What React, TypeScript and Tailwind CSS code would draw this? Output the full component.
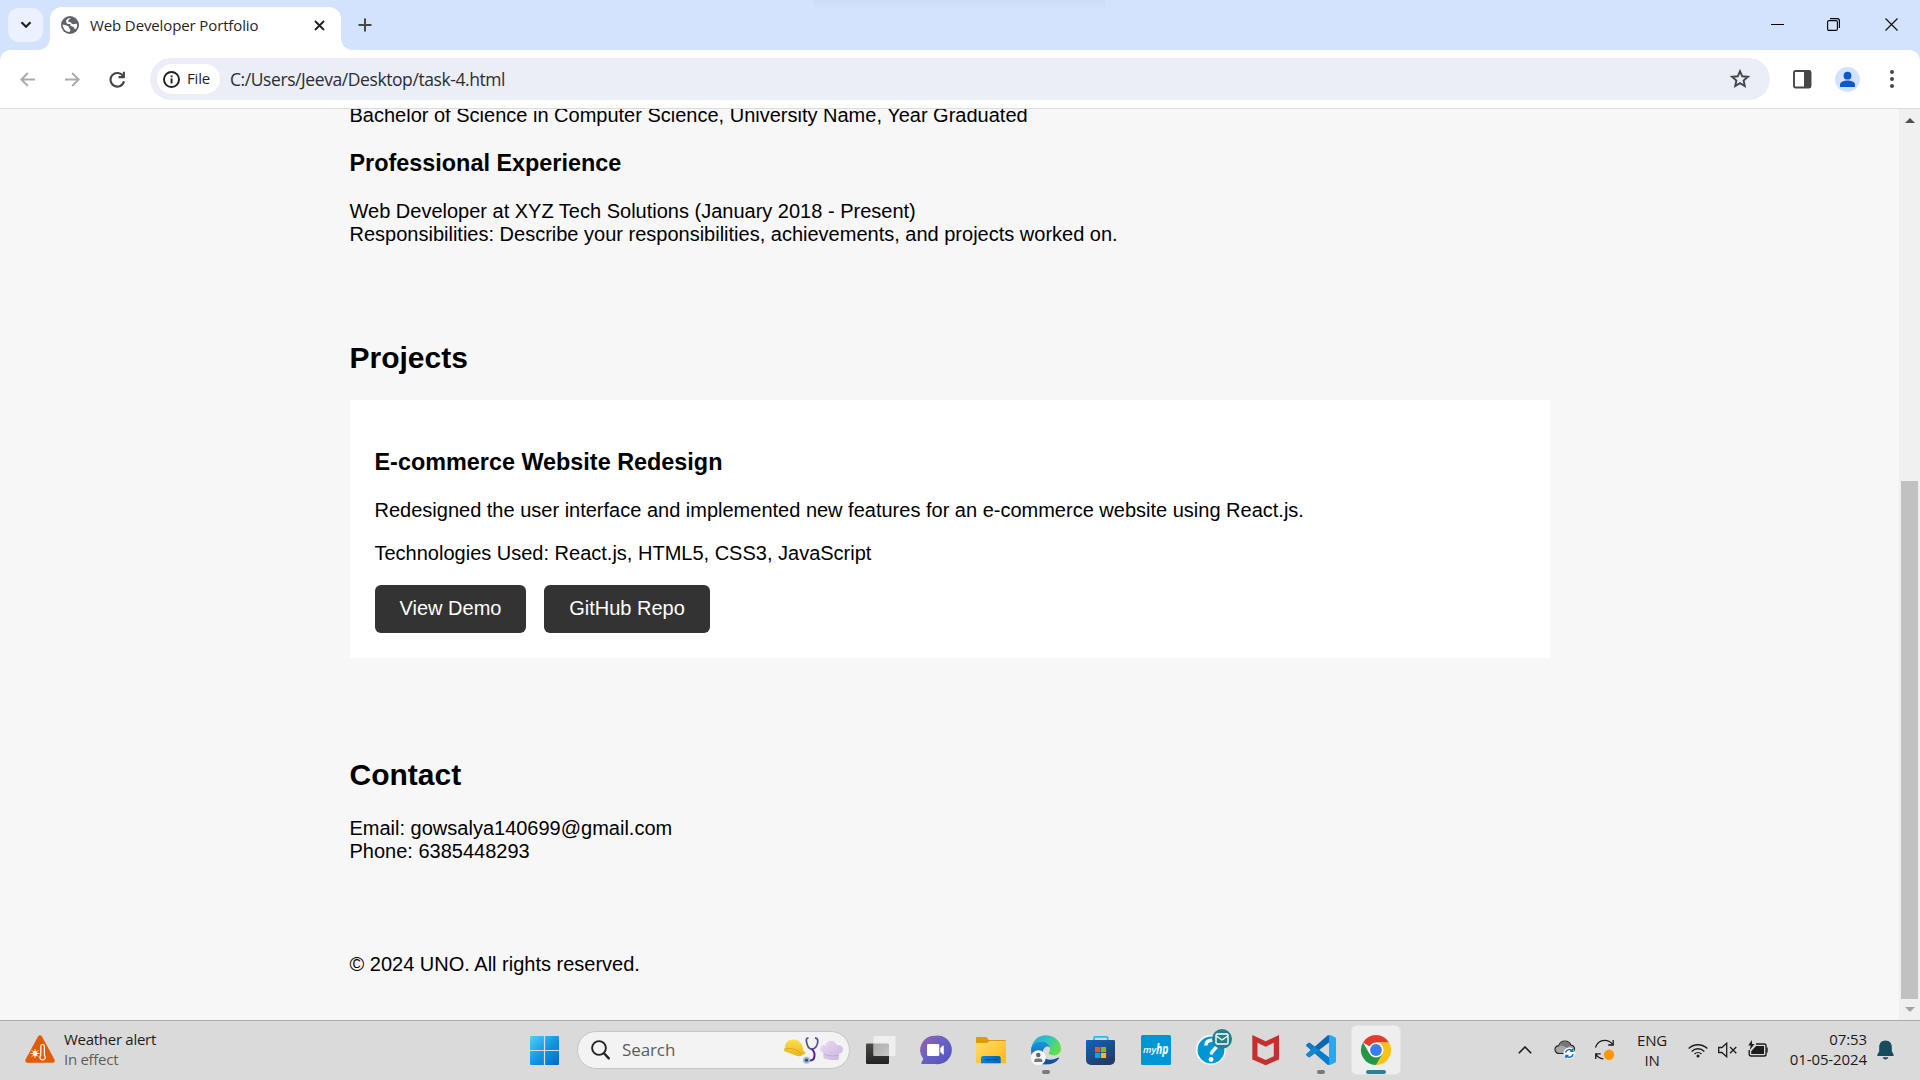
import React from "react";

const UI = "font-['Open_Sans','Noto_Sans',sans-serif]";

function TabStrip() {
  return (
    <div className="flex h-[50px] w-full items-start bg-[#d3e3fd]">
      <div className="ml-2 mt-2 flex h-[34px] w-[35px] items-center justify-center rounded-[11px] bg-[#ebf1fe]">
        <svg width="12" height="8" viewBox="0 0 12 8" fill="none">
          <path d="M1.5 1.2 6 5.7l4.500-4.500" stroke="#1f1f1f" strokeWidth="2.200" />
        </svg>
      </div>
      <svg className="-ml-[5px] mt-[38px]" width="12" height="12" viewBox="0 0 12 12">
        <path d="M12 0v12H0C7 12 12 7 12 0z" fill="#fff" />
      </svg>
      <div className="mt-[7px] flex h-[43px] w-[291px] items-center rounded-t-[12px] bg-white">
        <svg className="ml-[11px] -mt-[7px]" width="18" height="18" viewBox="0 0 18 18">
          <circle cx="9" cy="9" r="9" fill="#5f6368" />
          <path
            d="M9.8 1.900C9.300 3.300 7.800 3 7.300 4.300c-.5 1.500.8 1.900 1.900 1.900 1.200 0 1 1.500 2.200 1.900 1.500.4 2.600-.7 4.500-.2.500 2.100-.1 3.800-1 5.100-1.200.2-1.700-.2-1.900-1.200-.3-1.300-1.400-1.200-2.500-1.500-1.300-.4-1.200-1.500-1-2.300-1.400.1-2.700.2-3.700-.8-.8-.9-.8-2-.6-3C6.400 2.700 8 1.800 9.800 1.900z"
            fill="#fff"
          />
          <path d="M1.700 8.500c1.300.6 2.700.5 3.900.9 1.500.5 2.600 1.300 2.700 2.500.1 1.300 1.200 1.300 1.100 2.300-.1.800-.9 1.200-1 1.900C4.200 15.700 1.700 12 1.700 8.500z" fill="#fff" />
        </svg>
        <span className={`${UI} -mt-[7px] ml-[11px] w-[220px] whitespace-nowrap text-[15px] tracking-[-0.12px] text-[#1f1f1f]`}>
          Web Developer Portfolio
        </span>
        <svg className="-mt-[7px] ml-[4px]" width="11" height="11" viewBox="0 0 11 11">
          <path d="M1 1l9 9M10 1l-9 9" stroke="#1f1f1f" strokeWidth="1.800" />
        </svg>
      </div>
      <svg className="mt-[38px]" width="12" height="12" viewBox="0 0 12 12">
        <path d="M0 0v12h12C5 12 0 7 0 0z" fill="#fff" />
      </svg>
      <svg className="ml-[5px] mt-[18px]" width="14" height="14" viewBox="0 0 14 14">
        <path d="M7 .5v13M.5 7h13" stroke="#444746" strokeWidth="2" />
      </svg>
      <div className="ml-[442px] h-[10px] w-[291px] bg-linear-to-b from-[#cbdcf6] to-[#d3e3fd]" />
      <div className="ml-auto mr-[22px] flex items-start">
        <svg className="mt-[24px]" width="13" height="2" viewBox="0 0 13 2">
          <path d="M0 .5h13" stroke="#000" />
        </svg>
        <svg className="ml-[43px] mt-[18px]" width="13" height="13" viewBox="0 0 13 13" fill="none" stroke="#000" strokeWidth="1.100">
          <rect x=".6" y="2.600" width="9.800" height="9.800" rx="1.400" />
          <path d="M3 .6h7.200a2.200 2.200 0 0 1 2.200 2.200V10" />
        </svg>
        <svg className="ml-[45px] mt-[18px]" width="13" height="13" viewBox="0 0 13 13">
          <path d="M.5.5l12 12M12.500.5l-12 12" stroke="#111" strokeWidth="1.200" />
        </svg>
      </div>
    </div>
  );
}

function Toolbar() {
  return (
    <div className="h-[59px] w-full bg-[#d3e3fd]">
      <div className="flex h-[59px] w-full items-center rounded-t-[10px] border-b border-[#dcdcdc] bg-white">
        <svg className="ml-5" width="15" height="15" viewBox="0 0 15 15" fill="none" stroke="#a9abab" strokeWidth="1.900">
          <path d="M15 7.500H1.800M7.800 1 1.300 7.500l6.500 6.500" />
        </svg>
        <svg className="ml-[30px]" width="15" height="15" viewBox="0 0 15 15" fill="none" stroke="#a9abab" strokeWidth="1.900">
          <path d="M0 7.500h13.200M7.200 1l6.500 6.500L7.200 14" />
        </svg>
        <svg className="ml-[29px]" width="17" height="17" viewBox="0 0 17 17">
          <path d="M14.200 5.300A6.800 6.800 0 1 0 15 10.200" fill="none" stroke="#444746" strokeWidth="2.100" />
          <path d="M15.900.8v6.400H9.500V5.100h4.300V.8z" fill="#444746" />
        </svg>
        <div className="ml-[24px] flex h-[42px] w-[1620px] items-center rounded-full bg-[#ebeef7]">
          <div className="ml-[7px] flex h-[30px] w-[63px] items-center rounded-full bg-white">
            <svg className="ml-[6px]" width="17" height="17" viewBox="0 0 17 17">
              <circle cx="8.500" cy="8.500" r="7.500" fill="none" stroke="#1f1f1f" strokeWidth="1.900" />
              <path d="M7.600 7.500h1.900v5H7.600zM7.600 4.400h1.900v1.900H7.600z" fill="#1f1f1f" />
            </svg>
            <span className={`${UI} -mt-px ml-[7px] text-[15px] tracking-[-0.15px] text-[#1f1f1f]`}>File</span>
          </div>
          <span className={`${UI} ml-[10px] whitespace-nowrap text-[17.5px] tracking-[-0.42px] text-[#2a2d33]`}>
            C:/Users/Jeeva/Desktop/task-4.html
          </span>
          <svg className="ml-auto mr-5" width="20" height="20" viewBox="0 0 20 20">
            <path
              d="M10 2.200 12.200 7.300l5.600.5-4.200 3.700 1.200 5.500L10 14.100 5.200 17l1.200-5.500-4.200-3.700 5.600-.5z"
              fill="none"
              stroke="#444746"
              strokeWidth="1.900"
            />
          </svg>
        </div>
        <svg className="ml-[23px]" width="19" height="19" viewBox="0 0 19 19">
          <rect x="1" y="1" width="16.500" height="16.500" rx="1.500" fill="#fff" stroke="#444746" strokeWidth="1.900" />
          <path d="M11 1h6.500v16.500H11z" fill="#444746" />
        </svg>
        <svg className="ml-[23px]" width="25" height="25" viewBox="0 0 25 25">
          <circle cx="12.500" cy="12.500" r="12.500" fill="#d3e3fd" />
          <circle cx="12.500" cy="8.700" r="3.900" fill="#0b57d0" />
          <path d="M5 20v-2.500c0-2.700 4.500-4 7.500-4s7.500 1.300 7.500 4V20z" fill="#0b57d0" />
        </svg>
        <svg className="ml-[30px]" width="4" height="18" viewBox="0 0 4 18" fill="#444746">
          <circle cx="2" cy="2" r="2" />
          <circle cx="2" cy="9" r="2" />
          <circle cx="2" cy="16" r="2" />
        </svg>
      </div>
    </div>
  );
}

function Page() {
  return (
    <div className="flex h-[911px] w-full overflow-hidden bg-[#f7f7f7] font-['Liberation_Sans',Arial,sans-serif] text-[20px] leading-[23px] text-black">
      <main className="ml-[350px] w-[1200px]">
        <p className="-ml-[0.5px] -mt-[5px]">Bachelor of Science in Computer Science, University Name, Year Graduated</p>
        <h3 className="-ml-[0.5px] mt-[23px] text-[23.4px] font-bold leading-[27px]">Professional Experience</h3>
        <p className="-ml-[0.5px] mt-[23px]">
          Web Developer at XYZ Tech Solutions (January 2018 - Present)
          <br />
          Responsibilities: Describe your responsibilities, achievements, and projects worked on.
        </p>
        <h2 className="-ml-[0.5px] mt-[95px] text-[30px] font-bold leading-[34px]">Projects</h2>
        <section className="mt-[25px] h-[258px] bg-white px-[24.5px] pt-[49px]">
          <h3 className="text-[23.4px] font-bold leading-[27px]">E-commerce Website Redesign</h3>
          <p className="mt-[23px]">
            Redesigned the user interface and implemented new features for an e-commerce website using React.js.
          </p>
          <p className="mt-5">Technologies Used: React.js, HTML5, CSS3, JavaScript</p>
          <div className="ml-[0.5px] mt-5 flex gap-[18px] text-white">
            <button className="h-12 w-[151px] rounded-[6px] bg-[#333] pb-[2px]">View Demo</button>
            <button className="h-12 w-[166px] rounded-[6px] bg-[#333] pb-[2px]">GitHub Repo</button>
          </div>
        </section>
        <h2 className="-ml-[0.5px] mt-[100px] text-[30px] font-bold leading-[34px]">Contact</h2>
        <p className="-ml-[0.5px] mt-[25px]">
          Email: gowsalya140699@gmail.com
          <br />
          Phone: 6385448293
        </p>
        <p className="-ml-[0.5px] mt-[90px]">© 2024 UNO. All rights reserved.</p>
      </main>
      <div className="ml-auto flex w-[21px] flex-col items-center bg-[#f0f0f0]">
        <svg className="mt-[9px]" width="10" height="5" viewBox="0 0 10 5">
          <path d="M0 5l5-5 5 5z" fill="#505050" />
        </svg>
        <div className="mt-[358px] h-[518px] w-[17px] bg-[#c1c1c1]" />
        <svg className="mt-[8px]" width="10" height="5" viewBox="0 0 10 5">
          <path d="M0 0l5 5 5-5z" fill="#a3a3a3" />
        </svg>
      </div>
    </div>
  );
}

function Tile({ children, active = false }: { children: React.ReactNode; active?: boolean }) {
  return (
    <div className={active ? "h-12 w-12 rounded-[5px] bg-[#eeeeee] shadow-[0_0_0_1px_#e4e4e4]" : "h-12 w-12"}>
      <svg width="48" height="48" viewBox="0 0 48 48">
        {children}
      </svg>
    </div>
  );
}

function Apps() {
  return (
    <div className="ml-[7px] flex gap-[7px]">
      <Tile>
        <defs>
          <linearGradient id="tvDark" x1="0" y1="0" x2="0" y2="1">
            <stop offset="0" stopColor="#4a4a47" />
            <stop offset="1" stopColor="#222" />
          </linearGradient>
          <linearGradient id="tvMid" x1="0" y1="0" x2="1" y2="1">
            <stop offset="0" stopColor="#8f8f8f" />
            <stop offset="1" stopColor="#b5b5b5" />
          </linearGradient>
        </defs>
        <rect x="9" y="17.500" width="23" height="20.500" rx="1" fill="url(#tvDark)" />
        <rect x="16.500" y="10" width="22" height="20" rx="1" fill="#efefef" />
        <path d="M16.500 17.500H31a1 1 0 0 1 1 1V30H16.500z" fill="url(#tvMid)" opacity=".7" />
      </Tile>
      <Tile>
        <defs>
          <linearGradient id="chat" x1="0" y1="0" x2="1" y2="1">
            <stop offset="0" stopColor="#9a5fb0" />
            <stop offset=".45" stopColor="#6a62c4" />
            <stop offset="1" stopColor="#4f52c0" />
          </linearGradient>
        </defs>
        <path d="M23.500 9.700a14.300 14.300 0 1 1 0 28.300H10.200c-1 0-1.200-.8-.7-1.400l1.800-3.800A14.300 14.300 0 0 1 23.500 9.700z" fill="url(#chat)" />
        <rect x="15" y="18" width="12.300" height="12" rx="1.300" fill="#fff" />
        <path d="M28.300 22l2.600-2.400c.4-.3.900-.1.900.4v8c0 .5-.5.700-.9.400L28.300 26z" fill="#fff" />
      </Tile>
      <Tile>
        <defs>
          <linearGradient id="fold" x1="0" y1="0" x2="1" y2="1">
            <stop offset="0" stopColor="#ffdc6b" />
            <stop offset="1" stopColor="#fcb913" />
          </linearGradient>
          <linearGradient id="foldBlue" x1="0" y1="0" x2="1" y2="0">
            <stop offset="0" stopColor="#0b84d8" />
            <stop offset="1" stopColor="#0563b3" />
          </linearGradient>
        </defs>
        <path d="M9 12a1 1 0 0 1 1-1h9.300l2.500 3H38a1 1 0 0 1 1 1v5H9z" fill="#dd9c07" />
        <path d="M9 17h11l2.500-2H39v22.300H9z" fill="url(#fold)" />
        <path d="M14 37.300v-5a2.300 2.300 0 0 1 2.300-2.300h15a2.300 2.300 0 0 1 2.400 2.300v5z" fill="url(#foldBlue)" />
        <path d="M17.500 33.700h13" stroke="#063f77" strokeWidth="1" />
      </Tile>
      <Tile>
        <defs>
          <linearGradient id="edgeTop" x1="0" y1="0" x2="1" y2=".5">
            <stop offset="0" stopColor="#1fa6dc" />
            <stop offset=".5" stopColor="#2fc2c9" />
            <stop offset="1" stopColor="#62e04a" />
          </linearGradient>
          <linearGradient id="edgeLeft" x1="0" y1="0" x2="0" y2="1">
            <stop offset="0" stopColor="#1b93dd" />
            <stop offset="1" stopColor="#0b5cad" />
          </linearGradient>
        </defs>
        <path d="M9 24.500C9.500 16 15 9.200 24 9.200S39 16 39 22.800c0 4-3.200 6.600-7 6.600-3 0-5.300-1-5.300-2.300 0-1 1.300-1.400 1.300-3.700 0-3-3-5.700-8-5.700-6 0-10 3-11 6.800z" fill="url(#edgeTop)" />
        <path d="M9 24.500c0-5 4.500-8.700 10.500-8.700 4.500 0 7.500 2.500 8.300 5.400-1.300-1-3.500-1-5.300.8-3 3-2 8 1 11.500l1 5C15.500 38.700 9 32.500 9 24.500z" fill="url(#edgeLeft)" />
        <path d="M20.500 24.500c-1 5 2.500 9.300 7.300 9.300 3.800 0 6.400-1.300 8.600-2.300.6-.2 1 .3.700.8-2.600 4-7.600 6.500-13 6-4.800-1.300-6.800-9.200-3.600-13.800z" fill="#0f52a0" />
        <circle cx="16.300" cy="31.700" r="7.500" fill="#f7f7f7" />
        <circle cx="16.300" cy="29" r="2.300" fill="#666" />
        <path d="M12.300 36v-1.300c0-1.500 1-2.300 2.300-2.300H18c1.300 0 2.300.8 2.300 2.300V36z" fill="#777" />
        <rect x="20" y="44" width="8" height="4" rx="2" fill="#7a7a7a" />
      </Tile>
      <Tile>
        <defs>
          <linearGradient id="store" x1="0" y1="0" x2=".6" y2="1">
            <stop offset="0" stopColor="#0f66b8" />
            <stop offset="1" stopColor="#243a68" />
          </linearGradient>
        </defs>
        <path d="M17 15v-3.200a1 1 0 0 1 1-1h11.700a1 1 0 0 1 1 1V15" fill="none" stroke="#25bdf2" strokeWidth="1.800" />
        <path d="M9 15a1 1 0 0 1 1-1h27a1 1 0 0 1 1 1v19a5 5 0 0 1-5 5H14a5 5 0 0 1-5-5z" fill="url(#store)" />
        <path d="M18 21h5.200v5.200H18z" fill="#f35325" />
        <path d="M23.900 21h5.200v5.200h-5.200z" fill="#81bc06" />
        <path d="M18 26.900h5.200v5.200H18z" fill="#05a6f0" />
        <path d="M23.900 26.900h5.200v5.200h-5.200z" fill="#ffba08" />
      </Tile>
      <Tile>
        <rect x="9" y="9" width="30" height="30" rx="1.500" fill="#0096d6" />
        <text x="11" y="26.500" fill="#fff" fontFamily="Open Sans" fontSize="9" fontStyle="italic" fontWeight="600" textLength="13" lengthAdjust="spacingAndGlyphs">my</text>
        <text x="24" y="28" fill="#fff" fontFamily="Open Sans" fontSize="15" fontStyle="italic" fontWeight="700" textLength="12.500" lengthAdjust="spacingAndGlyphs">hp</text>
      </Tile>
      <Tile>
        <circle cx="24" cy="24" r="14.200" fill="#0096d6" stroke="#fff" strokeWidth="1.500" />
        <path d="M18.800 19.500c.2-3.500 2.500-5.300 5.700-5.300 3.500 0 5.500 1.800 5.500 4.700 0 4-5.300 4.500-5.700 9.600" fill="none" stroke="#fff" strokeWidth="3.400" />
        <circle cx="24" cy="33.500" r="2.400" fill="#fff" />
        <circle cx="35" cy="13" r="10" fill="#237f8b" />
        <rect x="29" y="8" width="12" height="10" rx="1.300" fill="none" stroke="#fff" strokeWidth="1.400" />
        <path d="M29.300 10l5.700 4 5.700-4" fill="none" stroke="#fff" strokeWidth="1.400" />
      </Tile>
      <Tile>
        <path d="M10.300 9 23.700 15.300 37 9v24.500L23.700 39.200 10.300 33.500z" fill="#c5302f" />
        <path d="M15.500 16.700l8.200 4 8.100-4v13.600l-8.100 3.600-8.200-3.600z" fill="#dadada" />
      </Tile>
      <Tile>
        <path d="M9.400 18.700l2-1.700c.5-.4 1-.4 1.500 0L33 32.300V39L30.500 38.500 9.400 20c-.4-.4-.4-.9 0-1.300z" fill="#0c7cc9" />
        <path d="M9.400 29.300l2 1.700c.5.400 1 .4 1.500 0L33 15.700V9l-2.500.5L9.400 28c-.4.400-.4.900 0 1.300z" fill="#0a68b0" />
        <path d="M9.400 18.700l2-1.700c.5-.4 1-.4 1.500 0L33 32.300V39L30.500 38.500 9.400 20c-.4-.4-.4-.9 0-1.300z" fill="#0c7cc9" />
        <path d="M9.400 29.300l2 1.700c.5.400 1 .4 1.500 0l9-6.800-5-2.800L9.400 28c-.4.400-.4.900 0 1.300z" fill="#1487d4" />
        <path d="M30.700 9.300 33 9l5 2.200c.6.300 1 .8 1 1.500v22.600c0 .7-.4 1.200-1 1.500L33 39l-2.500-.5c1.200.2 2-.6 2-1.800V11.300c0-1.200-.8-2-1.800-2z" fill="#2aa7f2" />
        <path d="M32 11h1v26h-1z" fill="#2aa7f2" />
        <rect x="20" y="44" width="8" height="4" rx="2" fill="#7a7a7a" />
      </Tile>
      <Tile active>
        <path d="M24 24 11 16.500A15 15 0 0 1 37 16.500H24z" fill="#e33b2e" />
        <path d="M24 16.500h13A15 15 0 0 1 24 39l6.500-11.300z" fill="#fbc116" />
        <path d="M11 16.500A15 15 0 0 0 24 39l6.500-11.300L24 24l-6.500 3.700z" fill="#249644" />
        <circle cx="24" cy="24" r="7.500" fill="#fff" />
        <circle cx="24" cy="24" r="5.900" fill="#3b7ded" />
        <rect x="14" y="44" width="20" height="4" rx="2" fill="#2a8391" />
      </Tile>
    </div>
  );
}

function SearchBox() {
  return (
    <div className="ml-[18px] flex h-[38px] w-[273px] items-center rounded-full border border-[#c6c6c6] bg-[#f3f3f3]">
      <svg className="ml-[13px]" width="19" height="20" viewBox="0 0 19 20" fill="none" stroke="#222" strokeLinecap="round">
        <circle cx="8" cy="8" r="6.900" strokeWidth="1.900" />
        <path d="M13 13.200l4.800 5.200" strokeWidth="2.300" />
      </svg>
      <span className={`${UI} ml-[12px] w-[161px] text-[17px] tracking-[-0.1px] text-[#5c5c5c]`}>Search</span>
      <svg width="61" height="28" viewBox="0 0 61 28">
        <defs>
          <linearGradient id="hat" x1="0" y1="0" x2="0" y2="1">
            <stop offset="0" stopColor="#fbe04d" />
            <stop offset="1" stopColor="#e8b51d" />
          </linearGradient>
          <linearGradient id="chef" x1="0" y1="0" x2="1" y2="1">
            <stop offset="0" stopColor="#e9def5" />
            <stop offset="1" stopColor="#c9b2de" />
          </linearGradient>
        </defs>
        <path d="M2 12C2 6 6 3 11 3.500c6 .6 9 5 9 10.500l2.500 3c.3 1-1 1.600-2.500 1.300-1.300 2-4 2.500-7 1.200L1.500 15.200C.4 14.500.4 12.600 2 12z" fill="url(#hat)" />
        <path d="M2 13c6-1.500 12 .5 17.500 5" fill="none" stroke="#d9a517" strokeWidth=".9" />
        <path d="M25.500 2.200c-2-.2-2.500 1-2 3.500.6 3.800 2 7.300 5 7.500 3.800.2 6.300-4 6.300-8 0-2.300-.8-3.200-2.800-3.400" fill="none" stroke="#544d87" strokeWidth="1.700" />
        <path d="M28.600 13c4 3 4.500 12-2.600 11.600h-1.500" fill="none" stroke="#55238f" strokeWidth="2" />
        <circle cx="23.500" cy="24.200" r="3.500" fill="#9dbbd9" />
        <circle cx="23.500" cy="24.200" r="1.600" fill="#335270" />
        <path d="M40.500 22.300 40.300 16.500c-3.800-1-4-5.300-1.300-6.800 1.300-.8 2.400-.7 3.300-.2C42.800 6.300 45 4.700 48 4.700s5 1.700 5.500 4.400c3.500-.6 6.500 1.300 6.500 4.200 0 2.700-2 4.300-4 4.500l-.3 5.700c-5 1-10.200.6-15.200-1.200z" fill="url(#chef)" />
        <path d="M40.500 18.300c5 1.600 10 2 15.300 1" fill="none" stroke="#bda6d2" strokeWidth=".8" />
      </svg>
    </div>
  );
}

function Tray() {
  return (
    <div className={`${UI} ml-auto mr-[26px] flex items-center text-[15px] leading-5 text-[#1c1c1c]`}>
      <svg width="14" height="8" viewBox="0 0 14 8" fill="none">
        <path d="M.8 7.200 7 1l6.200 6.200" stroke="#1c1c1c" strokeWidth="1.600" />
      </svg>
      <svg className="ml-[22px]" width="22" height="20" viewBox="0 0 22 20">
        <path d="M5.500 13.500c-2.500 0-4.500-1.500-4.500-4 0-2.300 1.700-3.600 3.700-3.900C5.800 2.800 8 1 11 1c2.800 0 5 1.700 5.900 4.200 2.300.3 3.600 2 3.600 4 0 2.500-1.800 4.300-4 4.300z" fill="#a7a7a7" stroke="#242424" strokeWidth="1.200" />
        <path d="M5 5.800c3-.8 5 .5 8 2.200l3.500-2.500C15.500 3 13.500 1.500 11 1.500S6 3 5 5.800z" fill="#777" />
        <circle cx="15.300" cy="13.300" r="5.700" fill="#fff" />
        <path d="M11.500 12.700a4 4 0 0 1 7-1.800M19.200 14a4 4 0 0 1-7 1.800M18.800 8.800v2.500h-2.500M11.900 18v-2.500h2.500" fill="none" stroke="#0f6cbd" strokeWidth="1.400" />
      </svg>
      <svg className="ml-[18px]" width="22" height="22" viewBox="0 0 22 22">
        <path d="M1.500 8.500C3 3.800 6.500 1.300 10.500 1.300c3.500 0 6.500 1.600 8.400 4.500M19.200 1v5h-5M1.700 20v-5.200h5M2 15.300c1.600 2.700 4 4.200 7.300 4.600" fill="none" stroke="#1c1c1c" strokeWidth="1.300" />
        <circle cx="15" cy="15.700" r="5.200" fill="#ff9800" />
      </svg>
      <div className="ml-[18px] w-[36px] text-center tracking-[-0.2px]">
        ENG
        <br />
        IN
      </div>
      <svg className="ml-[18px]" width="20" height="16" viewBox="0 0 20 16" fill="none" stroke="#1c1c1c" strokeWidth="1.400">
        <path d="M.7 6.600a13 13 0 0 1 18.600 0M3.700 9.400a8.800 8.800 0 0 1 12.600 0M6.500 12.100a5 5 0 0 1 7 0" />
        <circle cx="10" cy="14" r="1.500" fill="#1c1c1c" stroke="none" />
      </svg>
      <svg className="ml-[10px]" width="20" height="16" viewBox="0 0 20 16" fill="none" stroke="#1c1c1c" strokeWidth="1.300">
        <path d="M.7 5.500h3.200L8.700 1.200v13.600L3.900 10.500H.7z" />
        <path d="M12 5l6.300 6.300M18.300 5 12 11.300" />
      </svg>
      <svg className="-mt-[2px] ml-[10px]" width="21" height="18" viewBox="0 0 21 18">
        <path d="M8 4h8.200a1.800 1.800 0 0 1 1.800 1.800v8.400a1.800 1.800 0 0 1-1.800 1.800H3a1.800 1.800 0 0 1-1.800-1.800V10" fill="none" stroke="#1c1c1c" strokeWidth="1.400" />
        <path d="M8 6h8v8H3.200v-2.800z" fill="#1c1c1c" />
        <path d="M18.500 7.500h1.200v5h-1.200z" fill="#1c1c1c" />
        <path d="M3.800 0 .3 5.500h2.400L1.800 10l4.700-6H4z" fill="#1c1c1c" />
      </svg>
      <div className="-mt-[3px] ml-[17px] w-[81px] whitespace-nowrap text-right tracking-[-0.1px]">
        07:53
        <br />
        01-05-2024
      </div>
      <svg className="ml-[10px]" width="17" height="20" viewBox="0 0 17 20" fill="#164c5c">
        <path d="M8.500.5c3.800 0 6.300 2.800 6.300 6.400v4.300l1.900 3.600c.3.600 0 1.200-.7 1.200H1c-.7 0-1-.6-.7-1.200l1.900-3.600V6.900C2.200 3.300 4.700.5 8.500.5zM5.700 17.300h5.600c-.3 1.300-1.400 2.200-2.800 2.200s-2.500-.9-2.800-2.200z" />
      </svg>
    </div>
  );
}

function Taskbar() {
  return (
    <div className="flex h-[60px] w-full items-center border-t border-[#acacac] bg-[#dadada] pb-px">
      <svg className="-mt-[2px] ml-[25px]" width="30" height="30" viewBox="0 0 30 30">
        <path d="M15 3.500 27.500 26.500H2.500z" fill="#e35b07" stroke="#e35b07" strokeWidth="4.500" strokeLinejoin="round" />
        <circle cx="10" cy="19.500" r="2.400" fill="#fff" />
        <path d="M10 15v9M5.500 19.500h9M6.900 16.400l6.200 6.200M13.100 16.400l-6.200 6.200" stroke="#fff" strokeWidth=".9" />
        <path d="M15.800 21.300v-9a1.800 1.800 0 0 1 3.600 0v9a2.700 2.700 0 1 1-3.600 0z" fill="#e35b07" stroke="#fff" strokeWidth="1.200" />
      </svg>
      <div className={`${UI} -mt-[3px] ml-[9px] w-[466px] text-[15px] leading-5 tracking-[-0.28px] text-[#1c1c1c]`}>
        Weather alert
        <br />
        <span className="text-[#5e5e5e]">In effect</span>
      </div>
      <svg width="29" height="29" viewBox="0 0 29 29">
        <defs>
          <linearGradient id="win" x1="0" y1="0" x2="1" y2="1">
            <stop offset="0" stopColor="#4fd0fb" />
            <stop offset=".5" stopColor="#1597e2" />
            <stop offset="1" stopColor="#0569c8" />
          </linearGradient>
        </defs>
        <path d="M1 0h12.900v13.900H0V1a1 1 0 0 1 1-1zM15.100 0H28a1 1 0 0 1 1 1v12.900H15.100zM0 15.100h13.900V29H1a1 1 0 0 1-1-1zM15.100 15.100H29V28a1 1 0 0 1-1 1H15.100z" fill="url(#win)" />
      </svg>
      <SearchBox />
      <Apps />
      <Tray />
    </div>
  );
}

export default function App() {
  return (
    <div className="flex h-[1080px] w-[1920px] flex-col overflow-hidden bg-white">
      <TabStrip />
      <Toolbar />
      <Page />
      <Taskbar />
    </div>
  );
}
